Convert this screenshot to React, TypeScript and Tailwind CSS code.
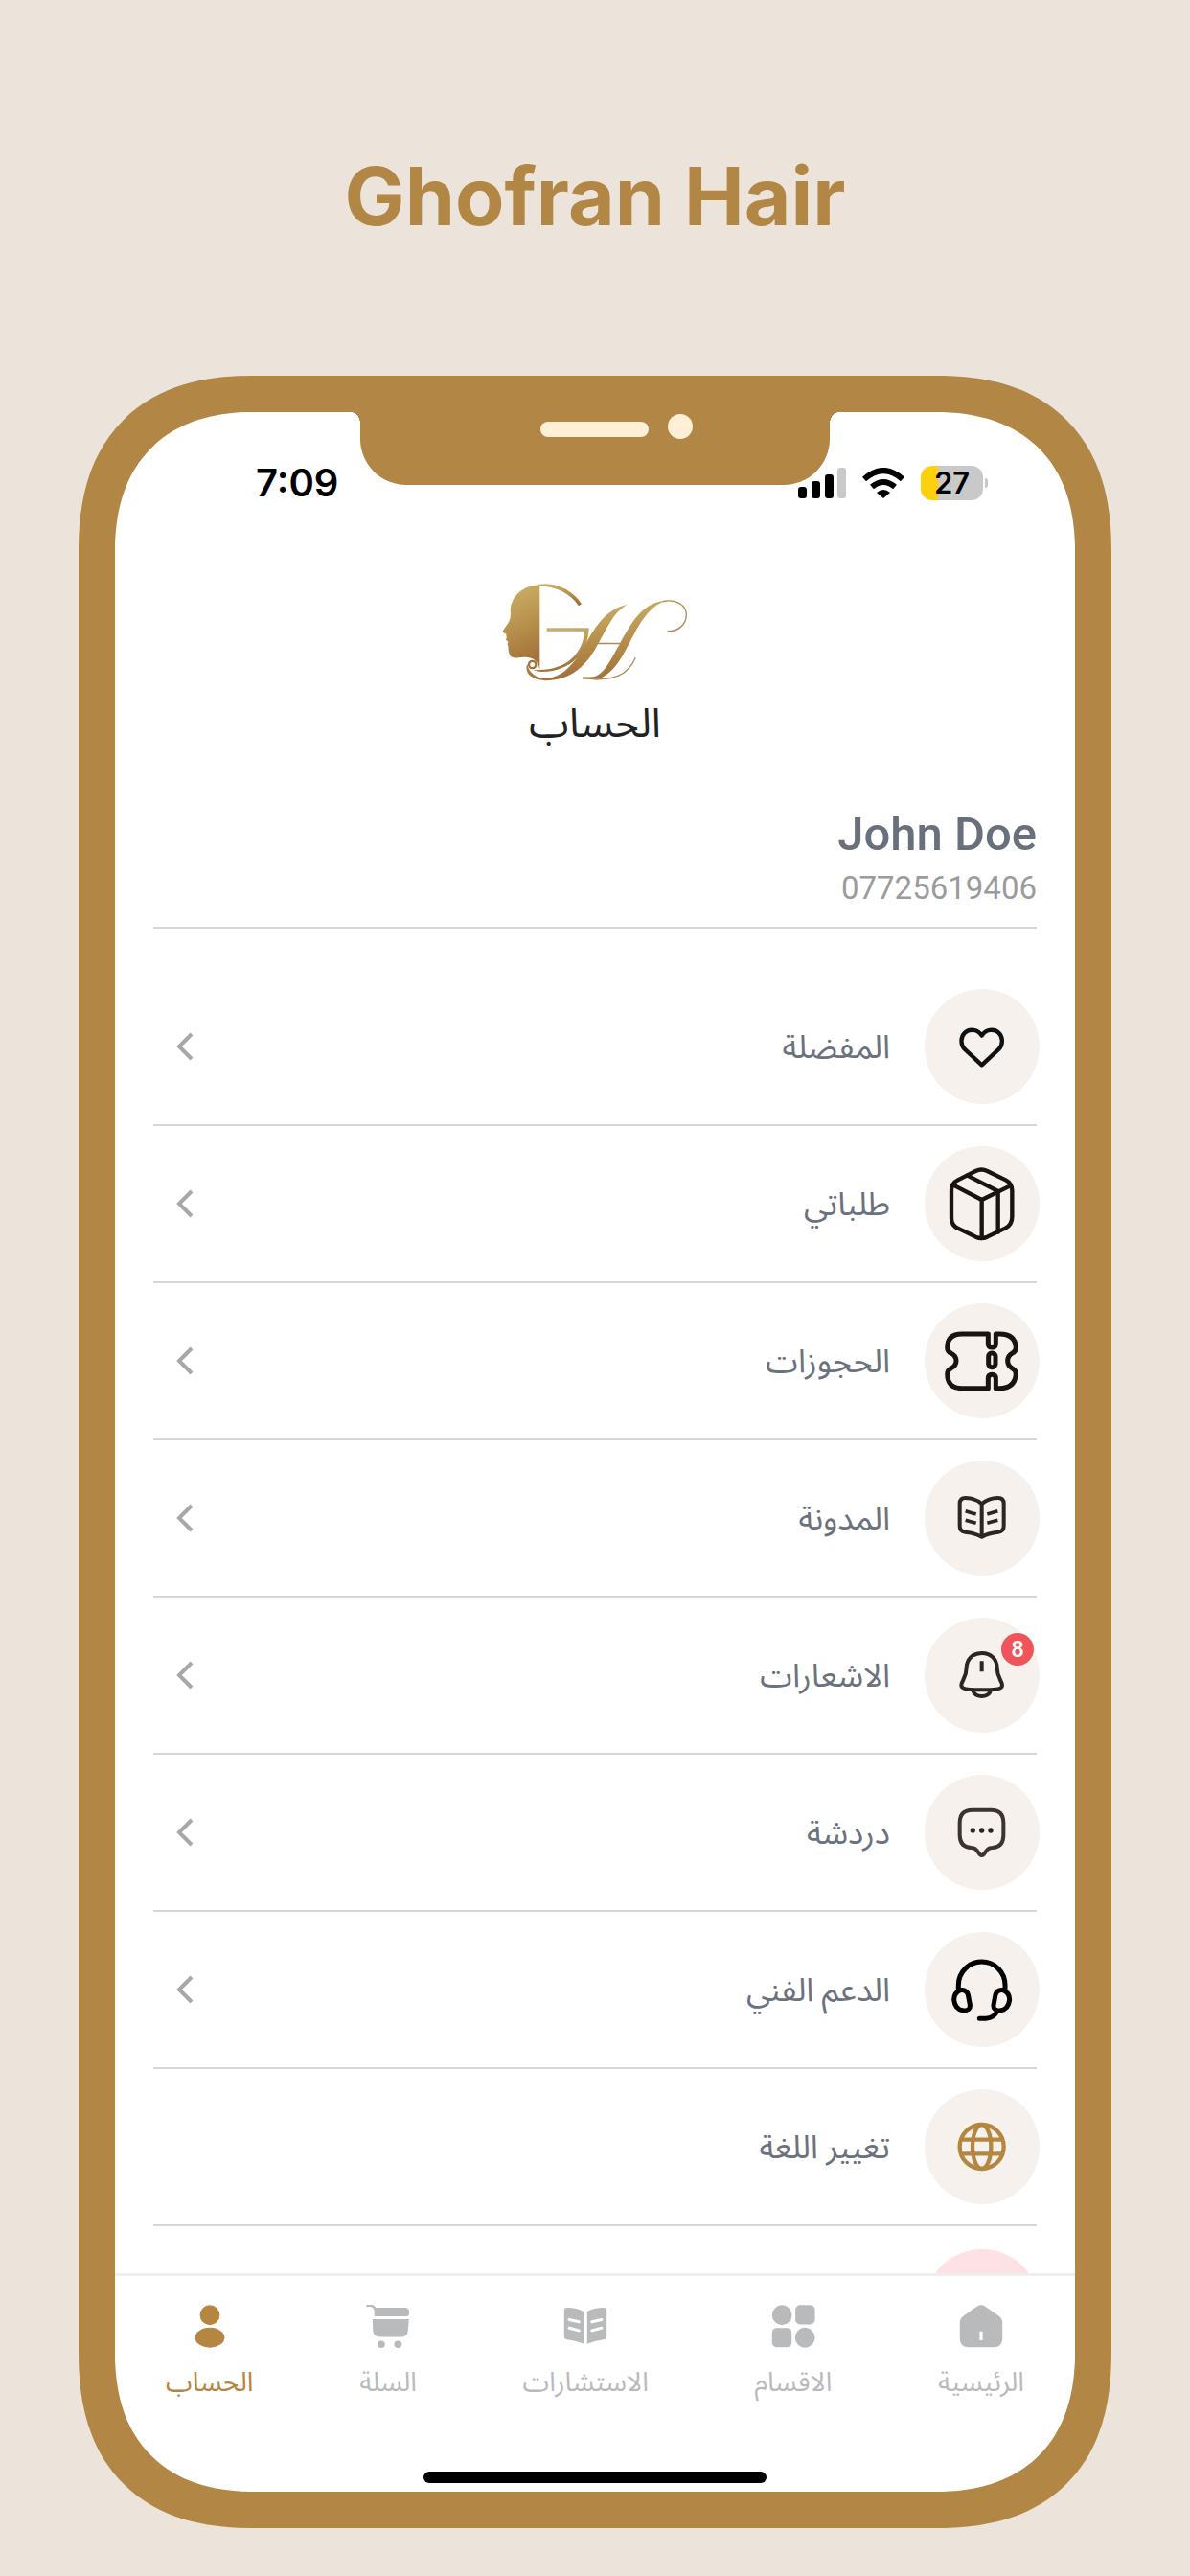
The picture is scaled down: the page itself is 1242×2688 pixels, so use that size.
import type { ReactNode } from 'react'

const HeartIcon = () => (
  <svg viewBox="0 0 360 360" className="size-full fill-none stroke-[#111] stroke-[13]" strokeLinejoin="round">
    <path d="M179 238 125 188C112 174 112 150 126 137c15-14 41-11 53 9 12-20 38-23 53-9 14 13 14 37 1 51z" />
  </svg>
)

const BoxIcon = () => (
  <svg viewBox="0 0 360 360" className="size-full fill-none stroke-[#1a1310] stroke-[13]" strokeLinejoin="round" strokeLinecap="round">
    <path d="M160 78q18-9 36 0l58 28q19 10 20 32v82q0 26-20 36l-58 28q-18 8-36 0l-56-27q-20-9-20-33v-86q0-22 20-32z" />
    <path d="m90 122 89 46 89-44M179 168v120M134 92l96 49v128" />
  </svg>
)

const TicketIcon = () => (
  <svg viewBox="0 0 360 360" className="size-full fill-none stroke-[#1a1310] stroke-[15]" strokeLinejoin="round">
    <path d="M199 96h-83q-44 0-45 42 0 13 11 18 17 8 17 24t-17 24q-11 5-11 18 1 44 45 44h83v-30q0-13 12-13t12 13v30h12q47 0 51-44 0-13-11-18-15-8-15-24t15-24q11-5 11-18-3-42-51-42h-12v29q0 13-12 13t-12-13z" />
    <rect x="200" y="156" width="22" height="44" rx="10" />
  </svg>
)

const BlogIcon = () => (
  <svg viewBox="0 0 360 360" className="size-full fill-none stroke-[#2b2523] stroke-[12]" strokeLinejoin="round">
    <path d="M179 136c-14-13-33-19-51-19q-18 0-18 18v70q0 17 17 19c20 2 38 7 52 15 14-8 32-13 52-15q17-2 17-19v-70q0-18-18-18c-18 0-37 6-51 19zM179 136v103" />
    <path className="stroke-[11]" d="m128 158 33 10m-33 19 33 9m68-38-33 10m33 19-33 9" />
  </svg>
)

const BellIcon = () => (
  <svg viewBox="0 0 360 360" className="size-full fill-none stroke-[#2b2523] stroke-[12]" strokeLinejoin="round">
    <path d="M179 111c-30 0-47 20-48 46 0 32-16 40-16 55 0 11 22 14 64 14s64-3 64-14c0-15-16-23-16-55-1-26-18-46-48-46zM151 228c6 24 50 24 56 0M179 136v33" />
  </svg>
)

const ChatIcon = () => (
  <svg viewBox="0 0 360 360" className="size-full fill-none stroke-[#3d3431] stroke-[12]" strokeLinejoin="round">
    <path d="M150 110h58q39 0 39 40v38q0 38-35 40-12 0-18 9l-9 12q-6 6-12 0l-9-12q-6-9-18-9-36-2-36-40v-38q0-40 40-40z" />
    <g className="fill-[#2b2523] stroke-none">
      <circle cx="151" cy="174" r="8" />
      <circle cx="179" cy="174" r="8" />
      <circle cx="207" cy="174" r="8" />
    </g>
  </svg>
)

const HeadsetIcon = () => (
  <svg viewBox="0 0 360 360" className="size-full fill-none stroke-black stroke-[15]" strokeLinejoin="round" strokeLinecap="round">
    <path d="M106 182v-16a73 73 0 0 1 146 0v16" />
    <path d="M112 182q-20 8-20 30 3 30 30 34 22 0 20-18l-6-32q-6-17-24-14zM246 182q20 8 20 30-3 30-30 34-22 0-20-18l6-32q6-17 24-14z" />
    <path d="M228 247q-10 22-36 24h-20" />
  </svg>
)

const GlobeIcon = () => (
  <svg viewBox="0 0 360 360" className="size-full fill-none stroke-[#b58640] stroke-[13]">
    <circle cx="179" cy="180" r="69" />
    <ellipse cx="179" cy="180" rx="29" ry="69" />
    <path d="M113 158h132M113 202h132" />
  </svg>
)

const tabIcon = { viewBox: '0 0 134 134', preserveAspectRatio: 'none', className: 'h-[45px] w-12', fill: 'currentColor' }

const AccountIcon = () => (
  <svg {...tabIcon}>
    <ellipse cx="67" cy="32" rx="29" ry="31" />
    <ellipse cx="67" cy="102" rx="43" ry="31" />
  </svg>
)

const CartIcon = () => (
  <svg {...tabIcon}>
    <path d="M7 3q20-3 24 14" fill="none" stroke="currentColor" strokeWidth="7" strokeLinecap="round" />
    <path d="M27 9h88q14 0 14 14t-10 13H27zM22 45h106l-3 36q-2 19-20 19H45q-20 0-22-19z" />
    <circle cx="47" cy="123" r="11" />
    <circle cx="96" cy="123" r="11" />
  </svg>
)

const ConsultIcon = () => (
  <svg {...tabIcon}>
    <path d="M5 17q0-8 9-8c20 0 34 4 48 12v100q-20-9-48-13-9-1-9-10zM129 17q0-8-9-8c-20 0-34 4-48 12v100q20-9 48-13 9-1 9-10z" />
    <path d="m20 46 28 7M20 72l28 8M114 46l-28 7m28 19-28 8" stroke="#fff" strokeWidth="9" strokeLinecap="round" />
  </svg>
)

const CategoriesIcon = () => (
  <svg {...tabIcon}>
    <ellipse cx="34" cy="32" rx="29" ry="31" />
    <rect x="73" y="1" width="57" height="60" rx="14" />
    <rect x="5" y="72" width="57" height="60" rx="14" />
    <ellipse cx="101" cy="102" rx="29" ry="31" />
  </svg>
)

const HomeIcon = () => (
  <svg {...tabIcon}>
    <path d="M55 5q12-8 24 0l39 29q11 9 11 21v50q0 27-26 27H31q-26 0-26-27V55q0-12 11-21z" />
    <path d="M67 83v27" stroke="#fff" strokeWidth="9" />
  </svg>
)

const Logo = () => (
  <svg viewBox="130 50 594 320" className="h-[107px] w-[198px]" role="img" aria-label="GH">
    <defs>
      <linearGradient id="gold" x1="0" y1="0" x2="0.2" y2="1">
        <stop offset="0" stopColor="#cdb36c" />
        <stop offset="0.5" stopColor="#ba954f" />
        <stop offset="1" stopColor="#a3713a" />
      </linearGradient>
    </defs>
    <g fill="url(#gold)">
      <path d="M254 62c-52 2-88 34-92 78 2 20 0 32-7 42l-17 25q1 7 11 9l1 12-2 7 7 5-2 8q4 8 3 20 2 24 25 23c26-4 44-4 56 6q14 12 17 31z" />
      <path d="M250 61C305 52 358 80 385 122l-9 6C350 90 305 66 250 67z" />
      <path d="M276 197h132c0 72-56 142-158 137l-18-6c100 8 158-48 162-120H276z" />
      <path d="M530 124c-48 24-66 78-103 141-35 58-82 97-155 97-46-2-68-26-57-52 6 34 34 46 62 45 42-4 74-34 101-76C420 212 450 140 530 124z" />
      <path d="M655 112c-48 10-76 52-103 100-36 66-58 124-118 147l-46-2v-6h26c40 0 60-52 91-105 42-76 76-132 150-134z" />
    </g>
    <circle cx="231" cy="312" r="11" fill="none" stroke="#a3713a" strokeWidth="7" />
    <path d="M640 114c42-8 73 12 73 42 0 32-28 54-59 51M426 246h94M420 357c60 4 108-8 134-67" fill="none" stroke="#b08a52" strokeWidth="4" />
  </svg>
)

const menu: { label: string; icon: ReactNode; badge?: number; arrow?: boolean }[] = [
  { label: 'المفضلة', icon: <HeartIcon />, arrow: true },
  { label: 'طلباتي', icon: <BoxIcon />, arrow: true },
  { label: 'الحجوزات', icon: <TicketIcon />, arrow: true },
  { label: 'المدونة', icon: <BlogIcon />, arrow: true },
  { label: 'الاشعارات', icon: <BellIcon />, badge: 8, arrow: true },
  { label: 'دردشة', icon: <ChatIcon />, arrow: true },
  { label: 'الدعم الفني', icon: <HeadsetIcon />, arrow: true },
  { label: 'تغيير اللغة', icon: <GlobeIcon /> },
]

const tabs: { label: string; icon: ReactNode; active?: boolean }[] = [
  { label: 'الرئيسية', icon: <HomeIcon /> },
  { label: 'الاقسام', icon: <CategoriesIcon /> },
  { label: 'الاستشارات', icon: <ConsultIcon /> },
  { label: 'السلة', icon: <CartIcon /> },
  { label: 'الحساب', icon: <AccountIcon />, active: true },
]

function Notch() {
  return (
    <div className="absolute inset-x-0 top-0 flex justify-center">
      <div className="h-3 w-2.5 bg-[radial-gradient(10px_12px_at_0_100%,transparent_98%,#b28745)]" />
      <div className="-mt-px flex h-[77px] w-[490px] justify-center gap-5 rounded-b-[48px] bg-[#b28745] pt-[3px] pl-11">
        <div className="mt-2 h-4 w-[113px] rounded-full bg-[#ffefd7]" />
        <div className="size-[26px] rounded-full bg-[#ffefd7]" />
      </div>
      <div className="h-3 w-2.5 bg-[radial-gradient(10px_12px_at_100%_100%,transparent_98%,#b28745)]" />
    </div>
  )
}

function StatusBar() {
  return (
    <div className="flex h-[148px] items-center justify-between pr-[91px] pl-[147px] font-[Inter,sans-serif] text-black">
      <span className="text-[40px] font-semibold">7:09</span>
      <div className="flex items-center gap-[17px]">
        <svg viewBox="0 0 50 32" className="h-8 w-[50px]">
          <rect y="20" width="9" height="12" rx="3" />
          <rect x="14" y="14" width="9" height="18" rx="3" />
          <rect x="28" y="7" width="9" height="25" rx="3" />
          <rect x="41" width="9" height="32" rx="3" fill="#c9c9c9" />
        </svg>
        <svg viewBox="0 0 44 32" className="h-8 w-11" fill="none" stroke="#000" strokeWidth="6">
          <path d="M2 12Q22-6 42 12M10 20q12-10 24 0" />
          <path d="m15 26q7-6 14 0l-7 6z" fill="#000" stroke="none" />
        </svg>
        <div className="flex items-center gap-0.5">
          <div className="flex h-9 w-[65px] items-center justify-center rounded-xl bg-[linear-gradient(to_right,#fdd00b_18px,#c9c9c9_18px)] text-[31px] font-semibold">
            27
          </div>
          <div className="h-2.5 w-[3px] rounded-r bg-[#c9c9c9]" />
        </div>
      </div>
    </div>
  )
}

export default function App() {
  return (
    <div className="min-h-screen bg-[#ece4da] px-[82px] pb-[49px]">
      <h1 className="pt-[145px] pb-[127px] text-center font-[Inter,sans-serif] text-[84px] leading-[120px] font-bold text-[#b28745]">
        Ghofran Hair
      </h1>

      <div className="relative overflow-hidden rounded-[156px] border-[38px] border-[#b28745] bg-white supports-[corner-shape:squircle]:rounded-[184px] supports-[corner-shape:squircle]:[corner-shape:superellipse(1.25)]">
        <StatusBar />
        <Notch />

        <div dir="rtl" className="font-[Roboto,'Noto_Sans_Arabic','DejaVu_Sans',sans-serif]">
          <header className="flex flex-col items-center pt-7">
            <Logo />
            <h2 className="mt-1.5 text-[42px] leading-[72px] text-[#222]">الحساب</h2>
          </header>

          <main className="px-10">
            <section className="border-b-2 border-[#d6d6d6] pt-[52px] pb-4">
              <p className="text-[49px] leading-[56px] font-medium text-[#69707c]">John Doe</p>
              <p className="mt-1 text-[33px] leading-[48px] text-[#9b9b9b]">07725619406</p>
            </section>

            <ul className="pt-[42px]">
              {menu.map((item) => (
                <li key={item.label} className="border-b-2 border-[#d6d6d6]">
                  <a href="#" className="-mr-[3px] flex h-[162px] items-center">
                    <span className="relative size-[120px] rounded-full bg-[#f6f1ec]">
                      {item.icon}
                      {item.badge && (
                        <span className="absolute top-4 right-1.5 flex size-[34px] items-center justify-center rounded-full bg-[#ee545a] text-[24px] font-medium text-white">
                          {item.badge}
                        </span>
                      )}
                    </span>
                    <span className="ms-9 text-[34px] text-[#6b727e]">{item.label}</span>
                    {item.arrow && (
                      <svg viewBox="0 0 18 30" className="ms-auto me-6 h-[30px] w-[18px] fill-none stroke-[#a8a8a8] stroke-4">
                        <path d="M16 2 3 15l13 13" />
                      </svg>
                    )}
                  </a>
                </li>
              ))}
              <li className="h-[49px] overflow-hidden pt-6">
                <button aria-label="تسجيل الخروج" className="-mr-[3px] block size-[120px] rounded-full bg-[#fde1e4]" />
              </li>
            </ul>
          </main>

          <nav className="flex items-start justify-between border-t-3 border-[#eee] px-[53px] pt-[30px]">
            {tabs.map((tab) => (
              <a
                key={tab.label}
                href="#"
                className={`flex flex-col items-center gap-3 ${tab.active ? 'text-[#b58640]' : 'text-[#b9babb]'}`}
              >
                {tab.icon}
                <span className="text-[28px] leading-[48px]">{tab.label}</span>
              </a>
            ))}
          </nav>
          <div className="mx-auto mt-[69px] mb-[9px] h-3 w-[358px] rounded-full bg-black" />
        </div>
      </div>
    </div>
  )
}
